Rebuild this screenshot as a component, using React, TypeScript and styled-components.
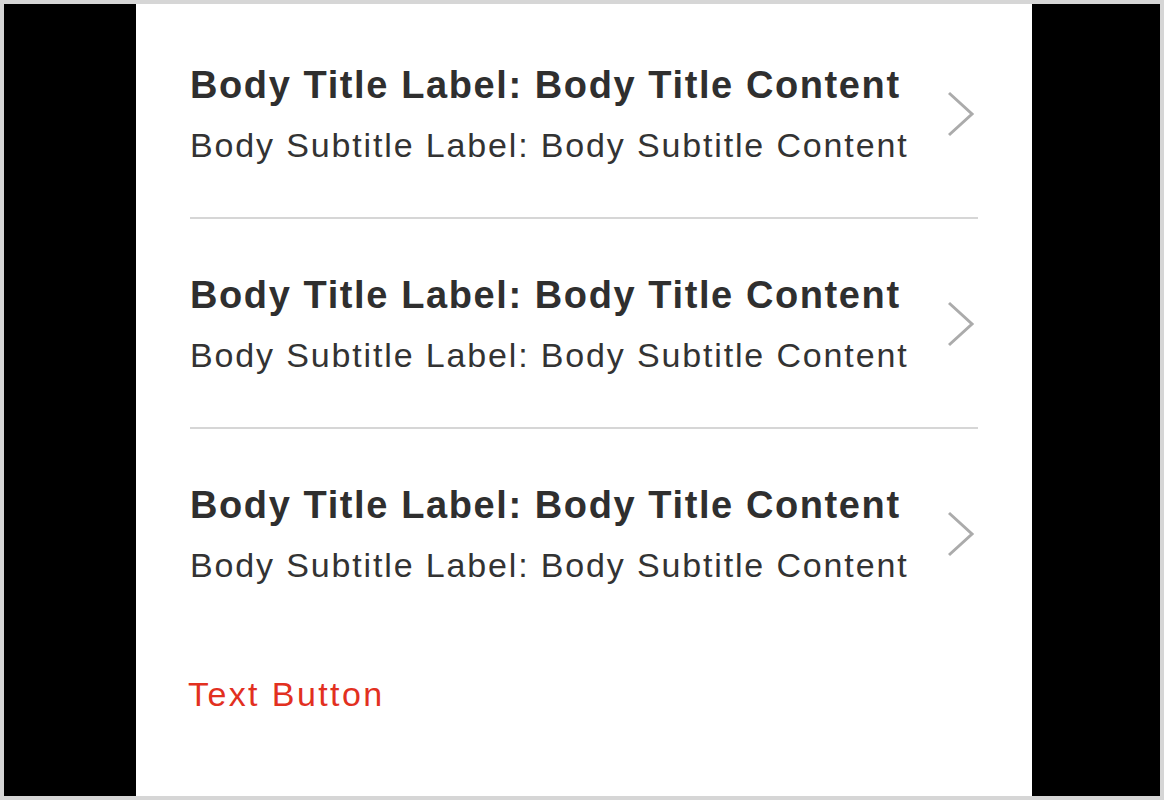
import React from "react";
import styled, { createGlobalStyle } from "styled-components";

const Global = createGlobalStyle`
  html, body { margin: 0; padding: 0; background: #fff; }
  body { font-family: "Liberation Sans", Arial, Helvetica, sans-serif; }
  * { box-sizing: border-box; }
`;

const Frame = styled.div`
  width: 1164px;
  height: 800px;
  border: 4px solid #d6d6d6;
  display: flex;
  background: #000;
`;

const SidePanel = styled.div<{ $w: number }>`
  width: ${(p) => p.$w}px;
  flex-shrink: 0;
  background: #000;
`;

const Screen = styled.div`
  flex: 1;
  background: #fff;
  padding: 5px 54px 0;
  display: flex;
  flex-direction: column;
`;

const Row = styled.div<{ $divider: boolean }>`
  display: flex;
  align-items: center;
  padding: 56px 0 54px;
  border-bottom: ${(p) => (p.$divider ? "2px solid #d6d6d6" : "none")};
`;

const TextBlock = styled.div`
  flex: 1;
  display: flex;
  flex-direction: column;
  gap: 22px;
`;

const Title = styled.div`
  font-size: 38px;
  line-height: 40px;
  font-weight: 700;
  letter-spacing: 1.6px;
  color: #2f2f2f;
  white-space: nowrap;
`;

const Subtitle = styled.div`
  font-size: 34px;
  line-height: 36px;
  letter-spacing: 1.85px;
  color: #333;
  white-space: nowrap;
`;

const Chevron = styled.svg`
  width: 30px;
  height: 46px;
  flex-shrink: 0;
`;

const TextButton = styled.button`
  align-self: flex-start;
  margin-top: 39px;
  margin-left: -2px;
  padding: 0;
  border: none;
  background: none;
  font-family: "Liberation Sans", Arial, Helvetica, sans-serif;
  font-size: 34px;
  line-height: 36px;
  letter-spacing: 2.4px;
  color: #e2301f;
  cursor: pointer;
`;

const rows = [0, 1, 2];

export default function App() {
  return (
    <>
      <Global />
      <Frame>
        <SidePanel $w={132} />
        <Screen>
          {rows.map((i) => (
            <Row key={i} $divider={i < rows.length - 1}>
              <TextBlock>
                <Title>Body Title Label: Body Title Content</Title>
                <Subtitle>Body Subtitle Label: Body Subtitle Content</Subtitle>
              </TextBlock>
              <Chevron viewBox="0 0 30 46">
                <polyline
                  points="1,2 24,23 1,44"
                  fill="none"
                  stroke="#ababab"
                  strokeWidth="3"
                />
              </Chevron>
            </Row>
          ))}
          <TextButton>Text Button</TextButton>
        </Screen>
        <SidePanel $w={128} />
      </Frame>
    </>
  );
}
